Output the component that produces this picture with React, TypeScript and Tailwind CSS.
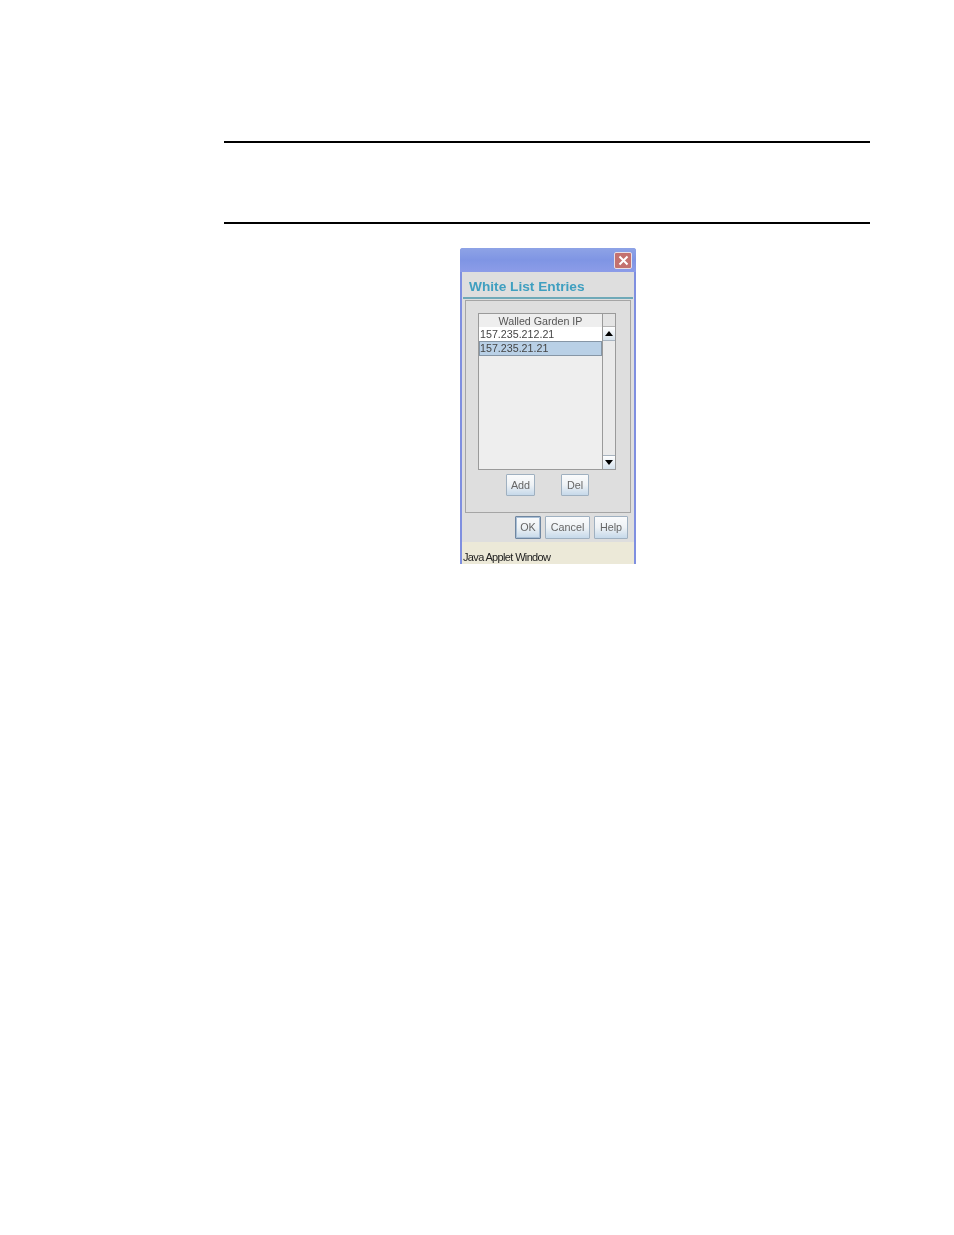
const Btn = ({ w, h = "h-[22px]", label, focus = false }: { w: string; h?: string; label: string; focus?: boolean }) => (
  <div
    className={`${w} ${h} flex items-center justify-center rounded-[1px] border ${focus ? "border-[#6f86a0] shadow-[inset_0_0_0_1px_#a9bfd6]" : "border-[#9fb0c0]"} bg-gradient-to-b from-[#fafbfc] via-[#eef2f5] to-[#c6d9ea] text-[10.8px] text-[#666]`}
  >
    {label}
  </div>
);

export default function App() {
  return (
    <div className="h-[1235px] w-[954px] overflow-hidden bg-white pt-[141px] font-['Liberation_Sans',sans-serif]">
      <div className="ml-[224px] flex h-[83px] w-[646px] flex-col justify-between">
        <div className="h-[2px] bg-black" />
        <div className="h-[2px] bg-black" />
      </div>

      <div className="ml-[460px] mt-[24px] flex h-[316px] w-[176px] flex-col overflow-hidden rounded-t-[3px] bg-[#7f8fe0] blur-[0.35px]">
        {/* title bar */}
        <div className="flex h-[24px] shrink-0 items-start justify-end bg-gradient-to-b from-[#8ea3e6] via-[#7f95e4] to-[#8c9ce8] pr-[4px] pt-[4px]">
          <div className="flex h-[17px] w-[18px] items-center justify-center rounded-[2px] border border-[#e8dfe6] bg-[#c4716f]">
            <svg width="11" height="11" viewBox="0 0 11 11">
              <path d="M1.5 1.5 L9.5 9.5 M9.5 1.5 L1.5 9.5" stroke="#fff" strokeWidth="2" />
            </svg>
          </div>
        </div>

        {/* body */}
        <div className="mx-[2px] flex min-h-0 flex-1 flex-col bg-[#dedede]">
          <div className="mx-[1px] flex h-[27px] shrink-0 items-center border-b-2 border-[#6fa9b8] pl-[6px] pt-[5px] text-[13.7px] text-[#3f9fc0] [font-weight:600]">
            White List Entries
          </div>

          <div className="mx-[3px] mt-[1px] flex h-[213px] shrink-0 flex-col border border-[#a5a5a5] px-[12px] pt-[12px]">
            <div className="flex h-[157px] w-[138px] shrink-0 border border-[#9a9a9a]">
              <div className="flex w-[123px] flex-col bg-[#eeeeee]">
                <div className="h-[13px] text-center text-[10.7px] leading-[15px] text-[#555]">Walled Garden IP</div>
                <div className="h-[14px] bg-white pl-[1px] text-[10.7px] leading-[14px] text-[#444]">157.235.212.21</div>
                <div className="h-[15px] border border-[#8696a6] bg-[#b9d0e6] text-[10.7px] leading-[13px] text-[#444]">157.235.21.21</div>
              </div>
              <div className="flex flex-1 flex-col border-l border-[#9a9a9a] bg-[#eeeeee]">
                <div className="h-[13px] border-b border-[#b5b5b5] bg-[#e4e4e4]" />
                <div className="flex h-[14px] items-center justify-center border-b border-[#a8b4c0] bg-gradient-to-b from-white to-[#d6e2ec]">
                  <svg width="8" height="5" viewBox="0 0 8 5"><path d="M4 0 L8 5 H0 Z" fill="#000" /></svg>
                </div>
                <div className="flex-1 bg-[#eaeaea]" />
                <div className="flex h-[14px] items-center justify-center border-t border-[#a8b4c0] bg-gradient-to-b from-white to-[#d6e2ec]">
                  <svg width="8" height="5" viewBox="0 0 8 5"><path d="M0 0 H8 L4 5 Z" fill="#000" /></svg>
                </div>
              </div>
            </div>
            <div className="mt-[4px] flex pl-[28px]">
              <Btn w="w-[29px]" label="Add" />
              <div className="ml-[26px]">
                <Btn w="w-[28px]" label="Del" />
              </div>
            </div>
          </div>

          <div className="flex h-[29px] shrink-0 items-center justify-end gap-[4px] pr-[6px]">
            <Btn w="w-[26px]" h="h-[23px]" label="OK" focus />
            <Btn w="w-[45px]" h="h-[23px]" label="Cancel" />
            <Btn w="w-[34px]" h="h-[23px]" label="Help" />
          </div>

          <div className="flex h-[22px] flex-1 items-end bg-[#ece9d8] pl-[1px] text-[11px] leading-[13px] tracking-[-0.65px] text-[#222]">
            Java Applet Window
          </div>
        </div>
      </div>
    </div>
  );
}
